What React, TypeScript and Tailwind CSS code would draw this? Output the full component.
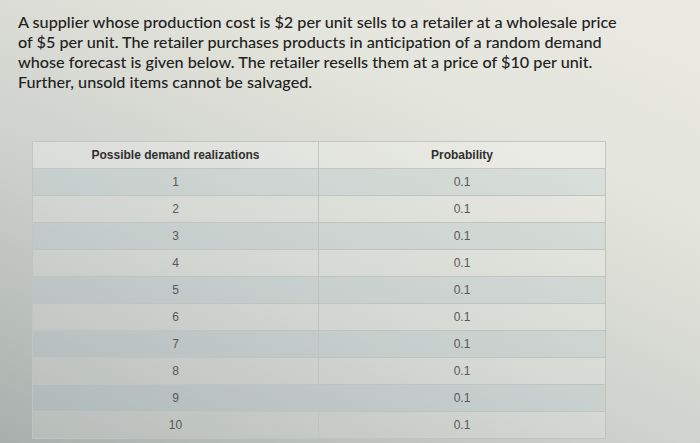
const rows = [1, 2, 3, 4, 5, 6, 7, 8, 9, 10].map((n) => ({ demand: n, prob: '0.1' }));

export default function App() {
  return (
    <div className="relative h-[443px] w-[700px] overflow-hidden bg-[linear-gradient(205deg,#eaeae2_0%,#e3e4db_30%,#cdd1cc_62%,#a8afac_100%)]">
      <p className="pl-[18px] pr-2 pt-[12px] font-['Lato',sans-serif] text-[16.2px] font-medium leading-[20px] text-[#222]">
        A supplier whose production cost is $2 per unit sells to a retailer at a wholesale price
        <br />
        of $5 per unit. The retailer purchases products in anticipation of a random demand
        <br />
        whose forecast is given below. The retailer resells them at a price of $10 per unit.
        <br />
        Further, unsold items cannot be salvaged.
      </p>

      <table className="ml-[32px] mt-[49px] w-[574px] border-collapse font-['Liberation_Sans',sans-serif] text-[12px]">
        <thead>
          <tr className="h-[27px] bg-white/25">
            <th className="w-[286px] border border-[#c3c7c1] font-bold text-[#303030]">Possible demand realizations</th>
            <th className="border border-[#c3c7c1] font-bold text-[#303030]">Probability</th>
          </tr>
        </thead>
        <tbody>
          {rows.map((row, i) => (
            <tr key={row.demand} className={`h-[27px] ${i % 2 === 0 ? 'bg-[#b9ccd2]/25' : 'bg-white/15'}`}>
              <td className="border border-[#bfc4bf] text-center text-[#585858]">{row.demand}</td>
              <td className="border border-[#bfc4bf] text-center text-[#585858]">{row.prob}</td>
            </tr>
          ))}
        </tbody>
      </table>
    </div>
  );
}
